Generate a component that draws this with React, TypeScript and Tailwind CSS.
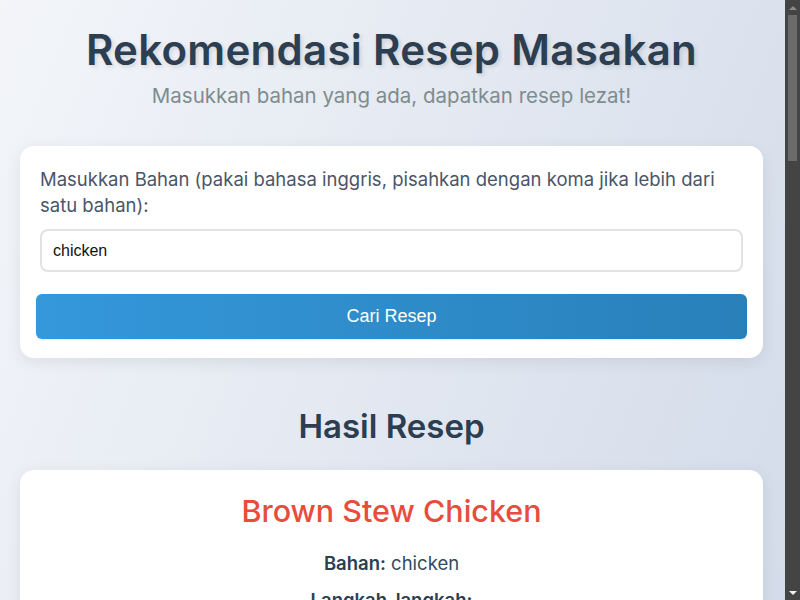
const steps = [
  'Squeeze lime over chicken and rub well. Drain off excess lime juice.',
  'Combine tomato, scallion, onion, garlic, pepper, thyme, pimento and soy sauce in a large bowl with the chicken pieces. Cover and marinate at least one hour.',
  'Heat oil in a dutch pot or large saucepan. Shake off the seasonings as you remove each piece of chicken from the marinade. Reserve the marinade for sauce.',
  'Lightly brown the chicken a few pieces at a time in very hot oil. Place browned chicken pieces on a plate to rest while you brown the remaining pieces.',
  'Drain off excess oil and return the chicken to the pan. Pour the marinade over the chicken and add the carrots. Stir and cook over medium heat for 10 minutes.',
  'Mix flour and coconut milk and add to stew, stirring constantly. Turn heat down to minimum and cook another 20 minutes or until tender.',
]

function Scrollbar() {
  return (
    <div className="flex w-[15px] shrink-0 flex-col items-center bg-[#444444]">
      <div className="flex h-[15px] items-center justify-center">
        <div className="h-0 w-0 border-x-[4px] border-b-[4px] border-x-transparent border-b-[#8a8a8a]" />
      </div>
      <div className="h-[146px] w-[9px] bg-[#6b6b6b]" />
      <div className="flex-1" />
      <div className="flex h-[15px] items-center justify-center">
        <div className="h-0 w-0 border-x-[4px] border-t-[4px] border-x-transparent border-t-[#f0f0f0]" />
      </div>
    </div>
  )
}

export default function App() {
  return (
    <div className="flex h-screen overflow-hidden">
      <div className="flex-1 overflow-hidden">
        <div className="bg-gradient-to-br from-[#f3f5f9] to-[#c3cfe2] font-['Inter',sans-serif] text-[#34495e]">
          <div className="mx-auto max-w-[800px] pl-5 pr-[22px] pt-[26px] pb-10">
            <h1 className="text-center text-[42px] font-semibold leading-[48px] tracking-[0.3px] text-[#2c3e50] [text-shadow:2px_2px_4px_rgba(0,0,0,0.12)]">
              Rekomendasi Resep Masakan
            </h1>
            <p className="mt-[9px] text-center text-[20.5px] leading-[26px] text-[#7f8c8d]">
              Masukkan bahan yang ada, dapatkan resep lezat!
            </p>

            <div className="mt-[37px] rounded-[14px] bg-white px-4 pt-[20px] pb-[19px] shadow-[0_4px_16px_rgba(0,0,0,0.08)]">
              <label className="mx-1 block pr-2 text-[18.5px] leading-[26px] text-[#4a5568]">
                Masukkan Bahan (pakai bahasa inggris, pisahkan dengan koma jika lebih dari satu bahan):
              </label>
              <div className="mx-1 mt-[11px]">
                <input
                  defaultValue="chicken"
                  className="h-[43px] w-full rounded-[8px] border-2 border-[#e2e2e2] bg-white px-[11px] font-['Liberation_Sans',sans-serif] text-[16px] text-[#111] outline-none"
                />
              </div>
              <button className="mt-[22px] h-[45px] w-full rounded-[6px] bg-gradient-to-r from-[#3498db] to-[#2980b9] font-['Liberation_Sans',sans-serif] text-[18px] text-white shadow-[0_1px_2px_rgba(0,0,0,0.1)]">
                Cari Resep
              </button>
            </div>

            <h2 className="mt-[46px] text-center text-[33px] font-semibold leading-[44px] text-[#2c3e50]">
              Hasil Resep
            </h2>

            <div className="mt-[22px] rounded-[14px] bg-white px-5 pt-[21px] pb-8 shadow-[0_4px_16px_rgba(0,0,0,0.08)]">
              <h3 className="text-center text-[30.5px] font-medium leading-[40px] text-[#e74c3c]">
                Brown Stew Chicken
              </h3>
              <p className="mt-[19px] text-center text-[18.5px] leading-[26px]">
                <span className="font-semibold text-[#2c3e50]">Bahan:</span> chicken
              </p>
              <p className="mt-[11px] text-center text-[18.5px] font-semibold leading-[26px] text-[#2c3e50]">
                Langkah-langkah:
              </p>
              <div className="mt-3 flex flex-col gap-3 text-[17px] leading-[28px]">
                {steps.map((s, i) => (
                  <p key={i}>{s}</p>
                ))}
              </div>
              <div className="mx-auto mt-6 h-[420px] w-[420px] rounded-[10px] bg-[#c9a27a]" />
            </div>

            <div className="mt-6 rounded-[14px] bg-white px-5 pt-[22px] pb-8 shadow-[0_4px_16px_rgba(0,0,0,0.08)]">
              <h3 className="text-center text-[30.5px] font-medium leading-[40px] text-[#e74c3c]">
                Chicken Handi
              </h3>
              <p className="mt-[19px] text-center text-[18.5px] leading-[26px]">
                <span className="font-semibold text-[#2c3e50]">Bahan:</span> chicken
              </p>
              <p className="mt-[11px] text-center text-[18.5px] font-semibold leading-[26px] text-[#2c3e50]">
                Langkah-langkah:
              </p>
              <div className="mt-3 flex flex-col gap-3 text-[17px] leading-[28px]">
                {steps.slice(0, 4).map((s, i) => (
                  <p key={i}>{s}</p>
                ))}
              </div>
            </div>
          </div>
        </div>
      </div>
      <Scrollbar />
    </div>
  )
}
